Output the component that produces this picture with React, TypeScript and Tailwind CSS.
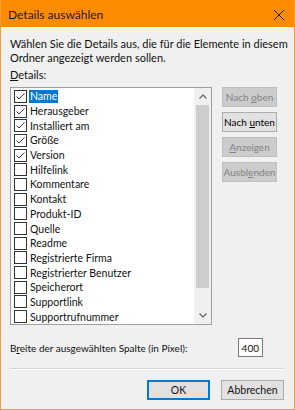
const items = [
  { label: 'Name', checked: true },
  { label: 'Herausgeber', checked: true },
  { label: 'Installiert am', checked: true },
  { label: 'Größe', checked: true },
  { label: 'Version', checked: true },
  { label: 'Hilfelink', checked: false },
  { label: 'Kommentare', checked: false },
  { label: 'Kontakt', checked: false },
  { label: 'Produkt-ID', checked: false },
  { label: 'Quelle', checked: false },
  { label: 'Readme', checked: false },
  { label: 'Registrierte Firma', checked: false },
  { label: 'Registrierter Benutzer', checked: false },
  { label: 'Speicherort', checked: false },
  { label: 'Supportlink', checked: false },
  { label: 'Supportrufnummer', checked: false }
];

function CheckBox({ checked }: { checked: boolean }) {
  return (
    <svg width="13" height="13" viewBox="0 0 13 13" className="shrink-0">
      <rect x="0.5" y="0.5" width="12" height="12" fill="#fff" stroke="#333" />
      {checked && <path d="M2.5 6.5 L5 9 L10.5 3.5" fill="none" stroke="#3c3c3c" strokeWidth="1" />}
    </svg>
  );
}

function SideButton({ children, enabled }: { children: React.ReactNode; enabled?: boolean }) {
  return (
    <div
      className={
        enabled
          ? 'h-[20px] w-[55px] flex items-center justify-center border border-[#adadad] bg-[#e1e1e1] text-black text-[10px]'
          : 'h-[20px] w-[55px] flex items-center justify-center border border-[#bfbfbf] bg-[#cccccc] text-[#838383] text-[10px]'
      }
    >
      <span className="whitespace-nowrap">{children}</span>
    </div>
  );
}

export default function App() {
  return (
    <div
      className="w-[295px] h-[410px] flex flex-col bg-[#f0f0f0] border border-t-0 border-[#fb9a3c] text-[11px] leading-[14px] text-[#111] whitespace-nowrap overflow-hidden"
      style={{ fontFamily: 'Lato, "Noto Sans", sans-serif' }}
    >
      <div className="h-[27px] -mx-px bg-[#ff8c00] flex items-center justify-between pl-[8px] pr-[11px] pt-[2px] shrink-0">
        <span className="text-[12px] text-[#1a1a1a]">Details auswählen</span>
        <svg width="10" height="10" viewBox="0 0 10 10">
          <path d="M0 0 L10 10 M10 0 L0 10" stroke="#222" strokeWidth="1" />
        </svg>
      </div>

      <div className="flex flex-col px-[9px] pt-[10px]">
        <p>
          Wählen Sie die Details aus, die für die Elemente in diesem
          <br />
          Ordner angezeigt werden sollen.
        </p>
        <div className="mt-[3px]">
          <span className="underline">D</span>etails:
        </div>

        <div className="flex mt-[5px] gap-[10px]">
          <div className="w-[202px] h-[238px] border border-[#a0a0a0] bg-white flex">
            <div className="flex-1 flex flex-col pl-[3px] pt-[1px] text-[10.5px]">
              {items.map((it, i) => (
                <div key={it.label} className="h-[14.75px] flex items-center gap-[2px]">
                  <CheckBox checked={it.checked} />
                  <span className={i === 0 ? 'bg-[#0078d7] text-white px-[1px] leading-[13px]' : 'px-[1px]'}>{it.label}</span>
                </div>
              ))}
            </div>
            <div className="w-[17px] bg-[#f0f0f0] flex flex-col items-center">
              <div className="h-[17px] flex items-center justify-center">
                <svg width="8" height="5" viewBox="0 0 8 5">
                  <path d="M0.5 4.5 L4 1 L7.5 4.5" fill="none" stroke="#606060" strokeWidth="1.2" />
                </svg>
              </div>
              <div className="w-[13px] h-[183px] bg-[#cdcdcd]" />
              <div className="flex-1" />
              <div className="h-[17px] flex items-center justify-center">
                <svg width="8" height="5" viewBox="0 0 8 5">
                  <path d="M0.5 0.5 L4 4 L7.5 0.5" fill="none" stroke="#606060" strokeWidth="1.2" />
                </svg>
              </div>
            </div>
          </div>

          <div className="flex flex-col gap-[5px]">
            <SideButton>
              Nach <span className="underline">o</span>ben
            </SideButton>
            <SideButton enabled>
              Nach <span className="underline">u</span>nten
            </SideButton>
            <SideButton>
              <span className="underline">A</span>nzeigen
            </SideButton>
            <SideButton>
              Ausbl<span className="underline">e</span>nden
            </SideButton>
          </div>
        </div>

        <div className="flex items-center justify-between w-[253px] mt-[13px]">
          <span className="text-[10px]">
            B<span className="underline">r</span>eite der ausgewählten Spalte (in Pixel):
          </span>
          <div className="w-[25px] h-[19px] bg-white border border-[#7a7a7a] flex items-center justify-end pr-[3px] text-[10px]">400</div>
        </div>

        <div className="w-[273px] h-[2px] mt-[11px] border-t border-[#d5d5d5] border-b border-b-white" />

        <div className="flex justify-end gap-[11px] mt-[10px] pr-[1px] text-[10.5px]">
          <div className="w-[63px] h-[20px] flex items-center justify-center bg-[#e1e1e1] border-2 border-[#0078d7]">OK</div>
          <div className="w-[63px] h-[20px] flex items-center justify-center bg-[#e1e1e1] border border-[#adadad]">Abbrechen</div>
        </div>
      </div>
    </div>
  );
}
